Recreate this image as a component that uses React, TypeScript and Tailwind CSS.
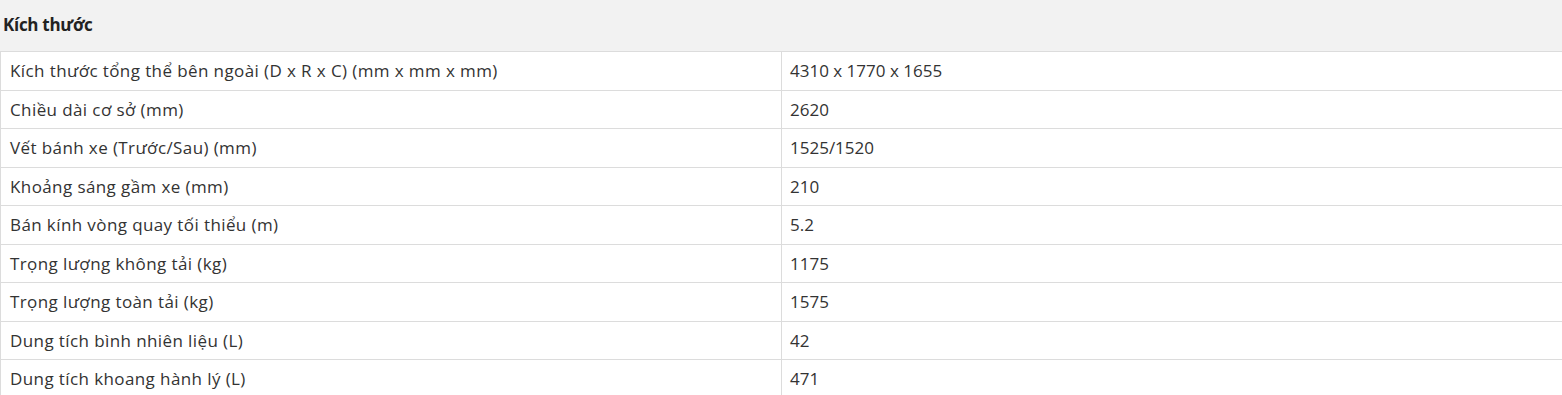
const ROWS: [string, string][] = [
  ['Kích thước tổng thể bên ngoài (D x R x C) (mm x mm x mm)', '4310 x 1770 x 1655'],
  ['Chiều dài cơ sở (mm)', '2620'],
  ['Vết bánh xe (Trước/Sau) (mm)', '1525/1520'],
  ['Khoảng sáng gầm xe (mm)', '210'],
  ['Bán kính vòng quay tối thiểu (m)', '5.2'],
  ['Trọng lượng không tải (kg)', '1175'],
  ['Trọng lượng toàn tải (kg)', '1575'],
  ['Dung tích bình nhiên liệu (L)', '42'],
  ['Dung tích khoang hành lý (L)', '471'],
];

export default function App() {
  return (
    <div className="w-[1562px] h-[395px] overflow-hidden bg-white text-[#333] font-['Open_Sans',sans-serif]">
      <div className="h-[51px] bg-[#f2f2f2] flex items-center pl-[3px] pb-[2px]">
        <span className="text-[17px] font-bold text-[#222] tracking-[-0.3px]">Kích thước</span>
      </div>
      <div className="border-l border-[#dcdcdc]">
        {ROWS.map(([label, value]) => (
          <div key={label} className="grid grid-cols-[781px_1fr] h-[38.5px] border-t border-[#dcdcdc] text-[17px]">
            <div className="flex items-center pl-[9px] border-r border-[#dcdcdc] tracking-[0.4px]">{label}</div>
            <div className="flex items-center pl-[8px]">{value}</div>
          </div>
        ))}
      </div>
    </div>
  );
}
